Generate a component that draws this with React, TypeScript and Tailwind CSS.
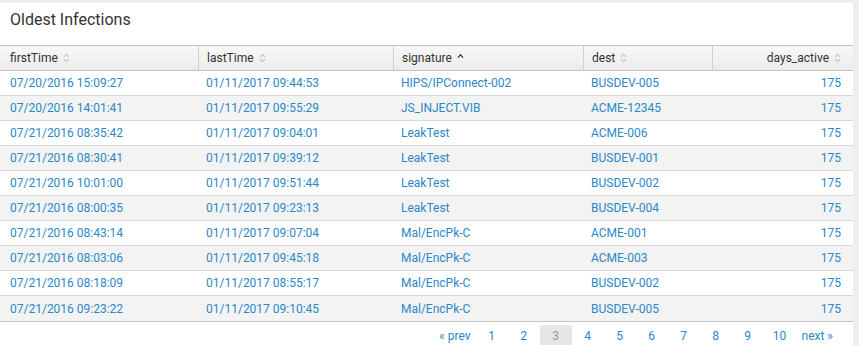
import React from "react";

type Row = {
  firstTime: string;
  lastTime: string;
  signature: string;
  dest: string;
  days: string;
};

const rows: Row[] = [
  { firstTime: "07/20/2016 15:09:27", lastTime: "01/11/2017 09:44:53", signature: "HIPS/IPConnect-002", dest: "BUSDEV-005", days: "175" },
  { firstTime: "07/20/2016 14:01:41", lastTime: "01/11/2017 09:55:29", signature: "JS_INJECT.VIB", dest: "ACME-12345", days: "175" },
  { firstTime: "07/21/2016 08:35:42", lastTime: "01/11/2017 09:04:01", signature: "LeakTest", dest: "ACME-006", days: "175" },
  { firstTime: "07/21/2016 08:30:41", lastTime: "01/11/2017 09:39:12", signature: "LeakTest", dest: "BUSDEV-001", days: "175" },
  { firstTime: "07/21/2016 10:01:00", lastTime: "01/11/2017 09:51:44", signature: "LeakTest", dest: "BUSDEV-002", days: "175" },
  { firstTime: "07/21/2016 08:00:35", lastTime: "01/11/2017 09:23:13", signature: "LeakTest", dest: "BUSDEV-004", days: "175" },
  { firstTime: "07/21/2016 08:43:14", lastTime: "01/11/2017 09:07:04", signature: "Mal/EncPk-C", dest: "ACME-001", days: "175" },
  { firstTime: "07/21/2016 08:03:06", lastTime: "01/11/2017 09:45:18", signature: "Mal/EncPk-C", dest: "ACME-003", days: "175" },
  { firstTime: "07/21/2016 08:18:09", lastTime: "01/11/2017 08:55:17", signature: "Mal/EncPk-C", dest: "BUSDEV-002", days: "175" },
  { firstTime: "07/21/2016 09:23:22", lastTime: "01/11/2017 09:10:45", signature: "Mal/EncPk-C", dest: "BUSDEV-005", days: "175" },
];

// column widths measured off the screenshot
const cols = ["w-[198px]", "w-[195px]", "w-[190px]", "w-[129px]", "flex-1"];
const pads = ["pl-[10px] pr-[8px]", "px-[8px]", "px-[8px]", "px-[8px]", "pl-[8px] pr-[12px]"];

const SortIcon = () => (
  <svg width="7" height="10" viewBox="0 0 7 10" className="ml-[5px]">
    <path d="M1 3.8 L3.5 1.3 L6 3.8" fill="none" stroke="#c4c4c4" strokeWidth="1.1" />
    <path d="M1 6.2 L3.5 8.7 L6 6.2" fill="none" stroke="#c4c4c4" strokeWidth="1.1" />
  </svg>
);

const SortedUp = () => (
  <svg width="7" height="10" viewBox="0 0 7 10" className="ml-[5px]">
    <path d="M1 4.6 L3.5 1.6 L6 4.6" fill="none" stroke="#333" strokeWidth="1.2" />
  </svg>
);

const HeaderCell = ({
  label,
  idx,
  sorted,
  right,
}: {
  label: string;
  idx: number;
  sorted?: boolean;
  right?: boolean;
}) => (
  <div
    className={`${cols[idx]} ${pads[idx]} flex items-center h-full ${
      idx > 0 ? "border-l border-[#cfcfcf]" : ""
    } ${right ? "justify-end" : ""}`}
  >
    <span>{label}</span>
    {sorted ? <SortedUp /> : <SortIcon />}
  </div>
);

export default function App() {
  return (
    <div
      className="w-[859px] h-[345px] bg-[#eeeeee] pt-[3px] pr-[6px] overflow-hidden text-[12px] text-[#333]"
      style={{ fontFamily: "Roboto, 'Liberation Sans', sans-serif" }}
    >
      <div className="bg-white h-full">
        <div className="h-[42px] px-[10px] pt-[5px] text-[16px] text-[#333]">
          Oldest Infections
        </div>

        <div className="flex h-[26px] border-y border-[#c3c3c3] bg-gradient-to-b from-[#f8f8f8] to-[#ececec]">
          <HeaderCell label="firstTime" idx={0} />
          <HeaderCell label="lastTime" idx={1} />
          <HeaderCell label="signature" idx={2} sorted />
          <HeaderCell label="dest" idx={3} />
          <HeaderCell label="days_active" idx={4} right />
        </div>

        <div className="border-b border-[#c3c3c3]">
          {rows.map((r, i) => (
            <div
              key={i}
              className={`flex h-[25px] items-center text-[#2b88c8] ${
                i % 2 === 1 ? "bg-[#f3f3f3]" : "bg-white"
              } ${i < rows.length - 1 ? "border-b border-[#d9d9d9]" : ""}`}
            >
              <div className={`${cols[0]} ${pads[0]}`}>{r.firstTime}</div>
              <div className={`${cols[1]} ${pads[1]}`}>{r.lastTime}</div>
              <div className={`${cols[2]} ${pads[2]}`}>{r.signature}</div>
              <div className={`${cols[3]} ${pads[3]}`}>{r.dest}</div>
              <div className={`${cols[4]} ${pads[4]} text-right`}>{r.days}</div>
            </div>
          ))}
        </div>

        <div className="flex justify-end items-start pt-[3px] pr-[20px] text-[#2b88c8]">
          <span className="mr-[5px] h-[22px] leading-[22px]">« prev</span>
          {["1", "2", "3", "4", "5", "6", "7", "8", "9", "10"].map((n) => (
            <span
              key={n}
              className={`w-8 h-[24px] leading-[22px] text-center ${
                n === "3" ? "bg-[#e6e6e6] text-[#999] rounded-t-[3px]" : ""
              }`}
            >
              {n}
            </span>
          ))}
          <span className="ml-[6px] h-[22px] leading-[22px]">next »</span>
        </div>
      </div>
    </div>
  );
}
